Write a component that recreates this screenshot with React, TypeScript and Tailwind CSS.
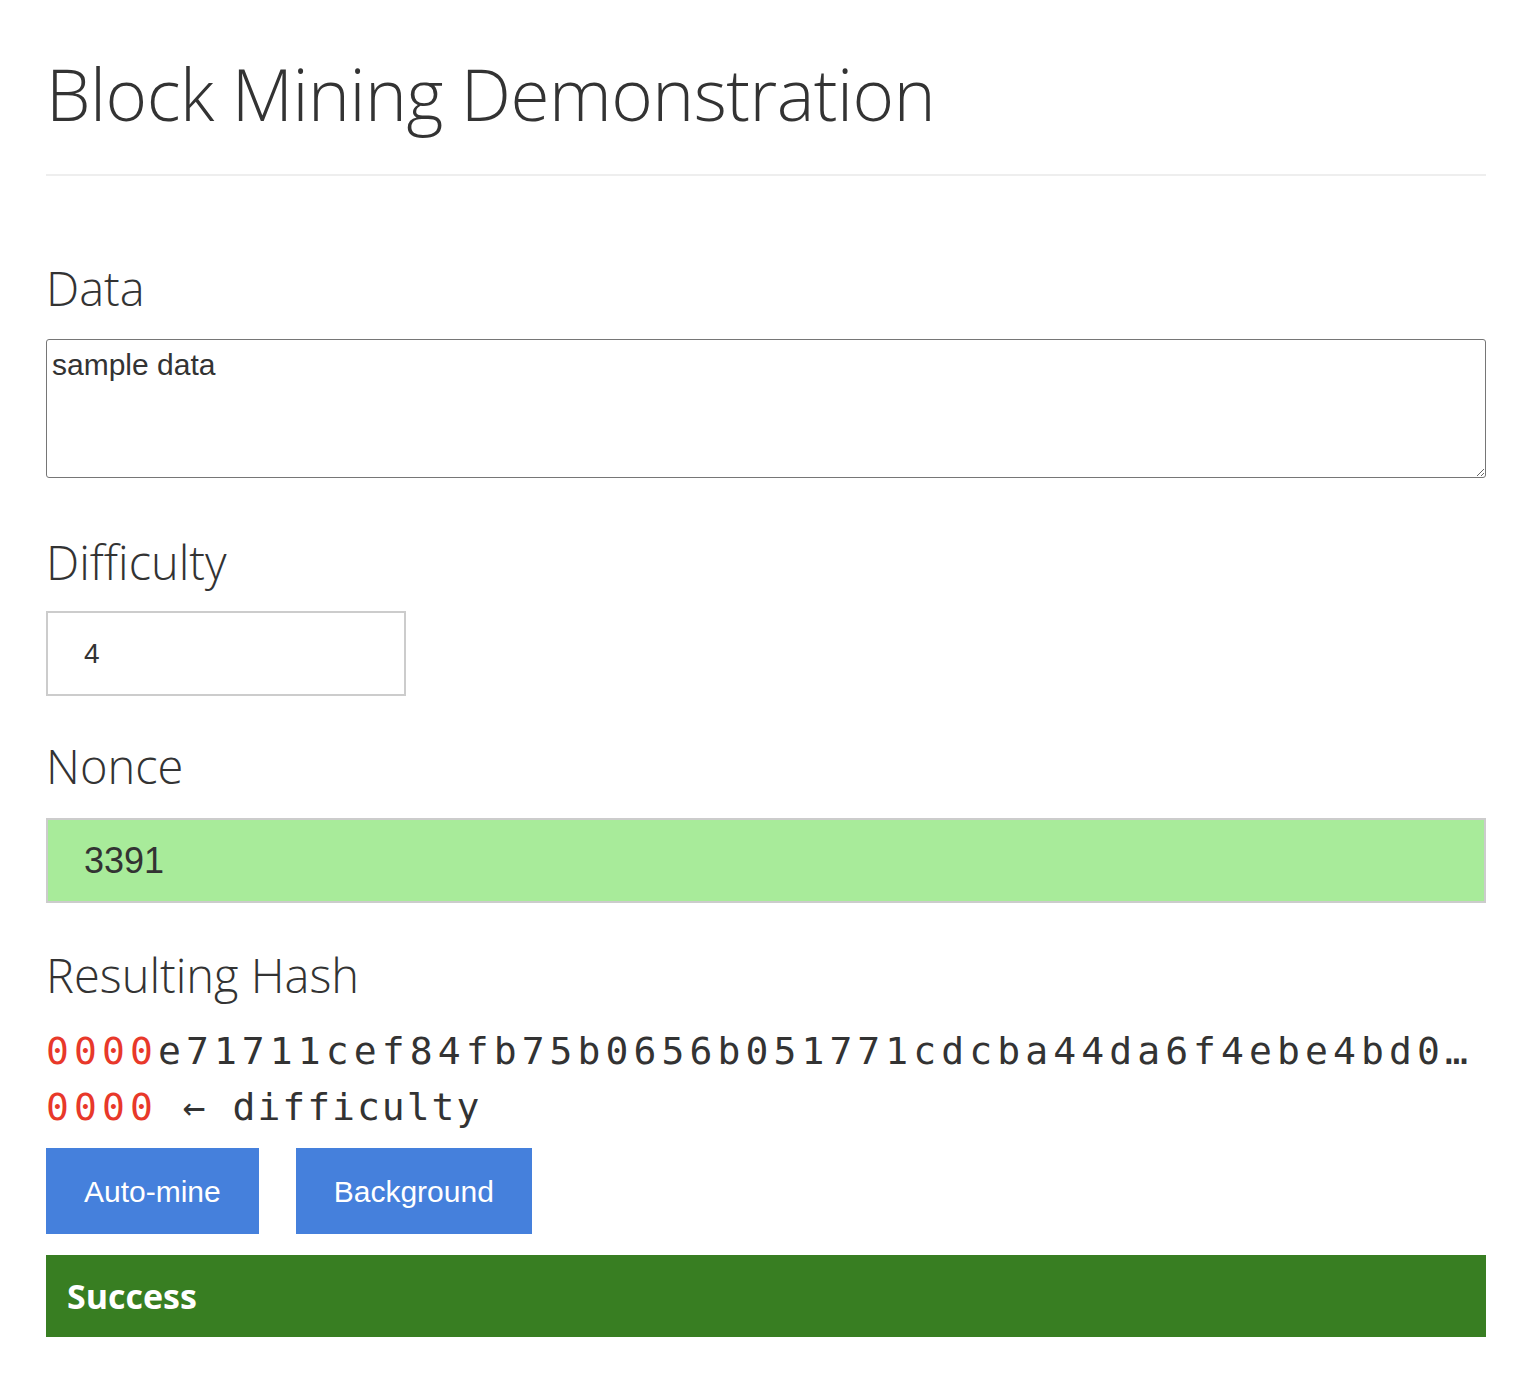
import { useState } from 'react';

const heading = '"Open Sans", "Noto Sans", sans-serif';
const sans = '"Liberation Sans", Arial, sans-serif';
const mono = '"DejaVu Sans Mono", "Liberation Mono", monospace';

export default function App() {
  const [data, setData] = useState('sample data');
  const [difficulty, setDifficulty] = useState('4');
  const [nonce, setNonce] = useState('3391');
  const hash = '0000e71711cef84fb75b0656b051771cdcba44da6f4ebe4bd0a29c0b3d1f77e2';
  const zeros = '0'.repeat(Number(difficulty) || 0);

  return (
    <div className="bg-white min-h-screen pl-[46px] pr-[52px] pt-[52px] pb-10 text-[#333]" style={{ fontFamily: heading }}>
      <h1 className="text-[71px] font-light leading-[84px] tracking-[-0.5px]">Block Mining Demonstration</h1>
      <hr className="mt-[38px] border-t-2 border-[#eee]" />

      <label className="block mt-[84px] text-[47px] font-light leading-[56px]">Data</label>
      <textarea
        value={data}
        onChange={(e) => setData(e.target.value)}
        className="mt-[23px] block w-full h-[139px] border border-[#767676] rounded-[3px] px-[5px] py-[6px] text-[30px] leading-[38px] text-[#333] outline-none"
        style={{ fontFamily: sans }}
      />

      <label className="block mt-[56px] text-[47px] font-light leading-[56px]">Difficulty</label>
      <input
        value={difficulty}
        onChange={(e) => setDifficulty(e.target.value)}
        className="mt-[21px] block w-[360px] h-[85px] border-2 border-[#ccc] px-[36px] text-[28px] text-[#333] outline-none"
        style={{ fontFamily: sans }}
      />

      <label className="block mt-[42px] text-[47px] font-light leading-[56px]">Nonce</label>
      <input
        value={nonce}
        onChange={(e) => setNonce(e.target.value)}
        className="mt-[24px] block w-full h-[85px] border-2 border-[#ccc] bg-[#a8eb9a] px-[36px] text-[36px] text-[#333] outline-none"
        style={{ fontFamily: sans }}
      />

      <label className="block mt-[44px] text-[47px] font-light leading-[56px]">Resulting Hash</label>
      <div className="mt-[20px] text-[38px] leading-[56px]" style={{ fontFamily: mono }}>
        <div className="overflow-hidden whitespace-nowrap text-ellipsis tracking-[5.1px]">
          <span className="text-[#e8382a]">{hash.slice(0, zeros.length)}</span>
          {hash.slice(zeros.length)}
        </div>
        <div className="whitespace-nowrap tracking-[2px]">
          <span className="text-[#e8382a] tracking-[5.1px]">{zeros}</span> ← difficulty
        </div>
      </div>

      <div className="mt-[13px] flex gap-[37px]" style={{ fontFamily: sans }}>
        <button className="h-[86px] px-[38px] bg-[#4580dc] text-white text-[30px]">Auto-mine</button>
        <button className="h-[86px] px-[38px] bg-[#4580dc] text-white text-[30px]">Background</button>
      </div>

      <div className="mt-[21px] h-[82px] bg-[#387e22] flex items-center px-[21px] text-white text-[34px] font-bold">
        Success
      </div>
    </div>
  );
}
